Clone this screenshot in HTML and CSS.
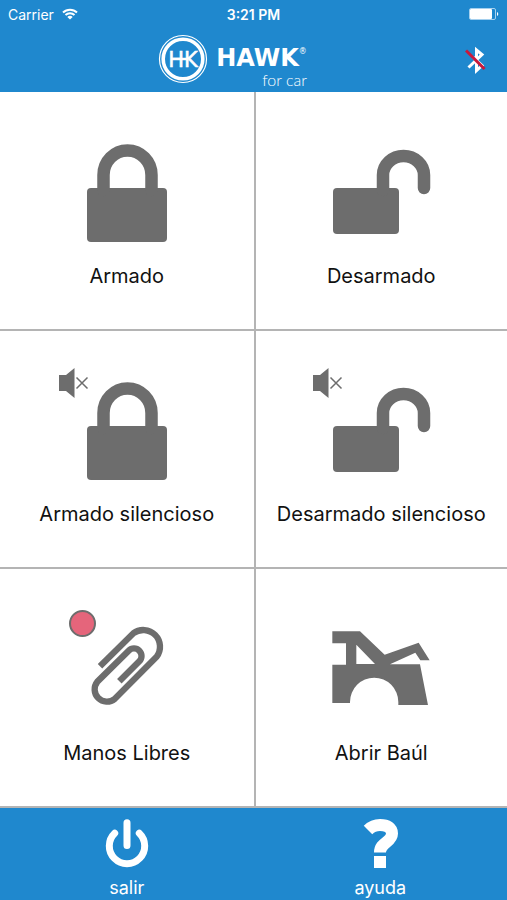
FILE: index.html
```html
<!DOCTYPE html>
<html lang="es">
<head>
    <meta charset="UTF-8">
    <meta name="viewport" content="width=device-width, initial-scale=1.0">
    <title>Hawk for car</title>
    <link rel="stylesheet" href="styles.css">
</head>
<body>
<!-- Shared icons -->
<svg class="sprite" aria-hidden="true">
    <symbol id="lock" viewBox="0 0 136 120">
        <rect x="28" y="60" width="80" height="54" rx="4"/>
        <path class="shackle" d="M44.500 62V47a24 24.500 0 0 1 48 0V62"/>
    </symbol>
    <symbol id="unlock" viewBox="0 0 136 120">
        <rect x="20" y="60" width="66" height="46" rx="4"/>
        <path class="shackle" d="M70 62V47a20.500 19 0 0 1 41 0V60"/>
    </symbol>
    <symbol id="mute" viewBox="0 0 30 34">
        <path d="M0 9H7L15.500 2V32L7 25H0z"/>
        <path class="cross" d="M17.500 11.500L28.500 22.500M28.500 11.500L17.500 22.500"/>
    </symbol>
</svg>

<header>
    <div class="status-bar">
        <div class="carrier">
            <span>Carrier</span>
            <svg class="wifi" viewBox="0 0 16 12">
                <path d="M1 4.500a10 10 0 0 1 14 0M3.500 7a6.500 6.500 0 0 1 9 0"/>
                <path class="dot" d="M8 11.500L5.300 8.900a4 4 0 0 1 5.400 0z"/>
            </svg>
        </div>
        <div class="time">3:21 PM</div>
        <svg class="battery" viewBox="0 0 30 12">
            <rect class="case" x="0.500" y="0.500" width="26" height="11" rx="1.500"/>
            <rect x="1" y="1" width="22" height="10" rx="1"/>
            <path d="M28 4a2.200 2.200 0 0 1 0 4z"/>
        </svg>
    </div>
    <div class="title-bar">
        <div class="logo">
            <svg class="emblem" viewBox="0 0 50 50">
                <circle cx="25" cy="25" r="23.500" stroke-width="1.200"/>
                <circle cx="25" cy="25" r="19.800" stroke-width="3.600"/>
                <path d="M13 25H29" stroke-width="2.500"/>
                <text x="25" y="33" text-anchor="middle">HK</text>
            </svg>
            <div class="brand">
                <div class="name">HAWK<sup>®</sup></div>
                <div class="tagline">for car</div>
            </div>
        </div>
        <svg class="bluetooth" viewBox="0 0 22 28" role="img" aria-label="Bluetooth desconectado">
            <path d="M3.500 21.500L17 8.500L11.500 4V24.500L17 19.500L8 11"/>
            <path class="slash" d="M1 4.500L19.500 23"/>
        </svg>
    </div>
</header>

<main>
    <button type="button">
        <svg class="icon" viewBox="0 0 136 120"><use href="#lock"/></svg>
        <span>Armado</span>
    </button>
    <button type="button">
        <svg class="icon" viewBox="0 0 136 120"><use href="#unlock"/></svg>
        <span>Desarmado</span>
    </button>
    <button type="button">
        <svg class="icon" viewBox="0 0 136 120">
            <use href="#lock"/>
            <use href="#mute" width="30" height="34"/>
        </svg>
        <span>Armado silencioso</span>
    </button>
    <button type="button">
        <svg class="icon" viewBox="0 0 136 120">
            <use href="#unlock"/>
            <use href="#mute" width="30" height="34"/>
        </svg>
        <span>Desarmado silencioso</span>
    </button>
    <button type="button">
        <svg class="icon" viewBox="0 0 136 120">
            <circle class="led" cx="23.500" cy="18.500" r="12.500"/>
            <path class="clip" transform="translate(-9 -10) scale(.3333)" d="M150 214L250 115A50 50 0 0 1 320 185L194 312A37 37 0 0 1 142 260L236 167A22 22 0 0 1 268 199L208 259"/>
        </svg>
        <span>Manos Libres</span>
    </button>
    <button type="button">
        <svg class="icon" viewBox="0 0 136 120">
            <path fill-rule="evenodd" transform="translate(-3 5) scale(.3333)" d="M67 64H150L224 134L326 98L359 151H331L316 128L240 163H330L354 285H265V276A72.500 73 0 0 0 120 276V279H67V164H108V100H67ZM139 104V162H195Z"/>
        </svg>
        <span>Abrir Baúl</span>
    </button>
</main>

<footer>
    <button type="button">
        <svg viewBox="0 0 50 50">
            <path class="power" d="M37.300 15.200A17.700 17.700 0 1 1 12.700 15.200M25 4.800V27.500"/>
        </svg>
        <span>salir</span>
    </button>
    <button type="button">
        <svg viewBox="0 0 50 50">
            <path class="question" d="M13 12C16.500 8.500 20 7 25 7C32.500 7 37 10 37 15.500C37 24.500 25 24 25 34.500"/>
            <rect x="19" y="38" width="12" height="12"/>
        </svg>
        <span>ayuda</span>
    </button>
</footer>
</body>
</html>
```

FILE: styles.css
```css
* {
    margin: 0;
    padding: 0;
    box-sizing: border-box;
}

body {
    display: flex;
    flex-direction: column;
    min-height: 100vh;
    font-family: Inter, Roboto, sans-serif;
    background-color: #fff;
}

svg {
    display: block;
}

.sprite {
    display: none;
}

header {
    background-color: #1f88ce;
    color: #fff;
}

/* Status bar */
.status-bar {
    display: grid;
    grid-template-columns: 1fr auto 1fr;
    align-items: center;
    height: 28px;
    padding: 0 8px;
    font-size: 14px;
}

.carrier {
    display: flex;
    align-items: center;
    gap: 8px;
}

.wifi {
    width: 16px;
    height: 12px;
    fill: none;
    stroke: #fff;
    stroke-width: 2;
}

.wifi .dot {
    fill: #fff;
    stroke: none;
}

.time {
    font-weight: 600;
}

.battery {
    width: 30px;
    height: 12px;
    justify-self: end;
    fill: #fff;
}

.battery .case {
    fill: none;
    stroke: #a5d0ee;
}

/* Logo bar */
.title-bar {
    display: flex;
    align-items: center;
    gap: 20px;
    height: 64px;
    padding: 0 20px;
}

.logo {
    display: flex;
    gap: 8px;
    margin: 4px auto 0;
}

.emblem {
    width: 50px;
    height: 50px;
    fill: none;
    stroke: #fff;
}

.emblem text {
    font-family: "DejaVu Sans", sans-serif;
    font-size: 21px;
    fill: #fff;
    stroke-width: 0.5px;
}

.brand {
    padding-top: 12px;
    text-align: right;
}

.name {
    display: flex;
    font-family: "DejaVu Sans", sans-serif;
    font-size: 24px;
    font-weight: bold;
    line-height: 24px;
}

.name sup {
    font-size: 8px;
    font-weight: normal;
    line-height: 12px;
}

.tagline {
    font-family: Lato, sans-serif;
    font-size: 16px;
    font-weight: 300;
    line-height: 20px;
}

.bluetooth {
    width: 22px;
    height: 28px;
    fill: none;
    stroke: #fff;
    stroke-width: 3;
}

.bluetooth .slash {
    stroke: #c8193c;
}

/* Action grid */
main {
    flex: 1;
    display: grid;
    grid-template-columns: 1fr 1fr;
    grid-auto-rows: 1fr;
}

button {
    display: flex;
    flex-direction: column;
    align-items: center;
    border: none;
    background: none;
    font-family: inherit;
    cursor: pointer;
}

main button {
    justify-content: center;
    gap: 14px;
    padding-bottom: 3px;
    border-bottom: 2px solid #b4b4b4;
    color: #111;
    font-size: 20px;
    line-height: 28px;
}

main button:nth-child(even) {
    border-left: 2px solid #b4b4b4;
}

main button:hover {
    background-color: #f5f5f5;
}

.icon {
    width: 136px;
    height: 120px;
    fill: #6d6d6d;
}

.shackle {
    fill: none;
    stroke: #6d6d6d;
    stroke-width: 12.5;
    stroke-linecap: round;
}

.cross {
    stroke: #6d6d6d;
    stroke-width: 1.5;
}

.led {
    fill: #e5657b;
    stroke: #6d6d6d;
    stroke-width: 2;
}

.clip {
    fill: none;
    stroke: #6d6d6d;
    stroke-width: 19;
}

/* Bottom bar */
footer {
    display: grid;
    grid-template-columns: 1fr 1fr;
    height: 92px;
    padding-top: 10px;
    background-color: #1f88ce;
}

footer button {
    gap: 8px;
    color: #fff;
    font-size: 18px;
    line-height: 24px;
}

footer svg {
    width: 50px;
    height: 50px;
    fill: #fff;
}

.power {
    fill: none;
    stroke: #fff;
    stroke-width: 7;
    stroke-linecap: round;
}

.question {
    fill: none;
    stroke: #fff;
    stroke-width: 12;
}
```
